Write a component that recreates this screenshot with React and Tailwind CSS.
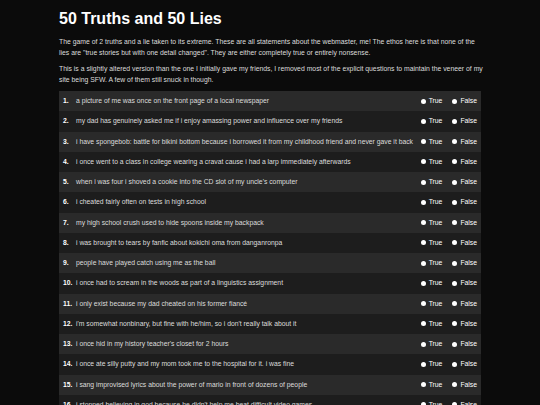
import React from "react";

const items = [
  "a picture of me was once on the front page of a local newspaper",
  "my dad has genuinely asked me if i enjoy amassing power and influence over my friends",
  "i have spongebob: battle for bikini bottom because i borrowed it from my childhood friend and never gave it back",
  "i once went to a class in college wearing a cravat cause i had a larp immediately afterwards",
  "when i was four i shoved a cookie into the CD slot of my uncle's computer",
  "i cheated fairly often on tests in high school",
  "my high school crush used to hide spoons inside my backpack",
  "i was brought to tears by fanfic about kokichi oma from danganronpa",
  "people have played catch using me as the ball",
  "i once had to scream in the woods as part of a linguistics assignment",
  "i only exist because my dad cheated on his former fiancé",
  "i'm somewhat nonbinary, but fine with he/him, so i don't really talk about it",
  "i once hid in my history teacher's closet for 2 hours",
  "i once ate silly putty and my mom took me to the hospital for it. i was fine",
  "i sang improvised lyrics about the power of mario in front of dozens of people",
  "i stopped believing in god because he didn't help me beat difficult video games",
];

const Radio = ({ label }) => (
  <label className="flex items-center gap-[3px]">
    <span className="block w-[5px] h-[5px] rounded-full bg-white" />
    <span>{label}</span>
  </label>
);

export default function App() {
  return (
    <div
      className="min-h-screen bg-[#0b0b0b] text-[#dcdcdc]"
      style={{ fontFamily: '"Liberation Sans", Arial, sans-serif' }}
    >
      <div className="w-[422px] mx-auto pt-[9px]">
        <h1 className="text-[16px] leading-[20px] font-bold text-white">50 Truths and 50 Lies</h1>

        <p className="mt-[8px] text-[6.85px] leading-[10.5px] whitespace-nowrap">
          The game of 2 truths and a lie taken to its extreme. These are all statements about the webmaster, me! The ethos here is that none of the
          <br />
          lies are "true stories but with one detail changed". They are either completely true or entirely nonsense.
        </p>
        <p className="mt-[6px] text-[6.85px] leading-[10.5px] whitespace-nowrap">
          This is a slightly altered version than the one I initially gave my friends, I removed most of the explicit questions to maintain the veneer of my
          <br />
          site being SFW. A few of them still snuck in though.
        </p>

        {/* question list */}
        <div className="mt-[6px] text-[6.8px]">
          {items.map((q, i) => (
            <div
              key={i}
              className={`flex items-center h-[20.25px] pl-[4px] pr-[4px] ${i % 2 === 0 ? "bg-[#2a2a2a]" : "bg-[#1d1d1d]"}`}
            >
              <span className="w-[13px] font-bold text-white">{i + 1}.</span>
              <span className="flex-1 whitespace-nowrap">{q}</span>
              <div className="flex items-center gap-[10px] ml-[4px] text-white">
                <Radio label="True" />
                <Radio label="False" />
              </div>
            </div>
          ))}
        </div>
      </div>
    </div>
  );
}
